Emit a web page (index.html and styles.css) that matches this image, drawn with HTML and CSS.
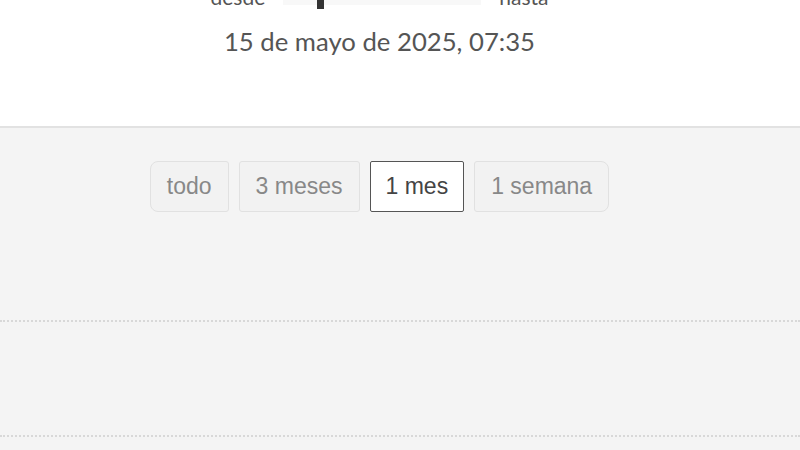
FILE: index.html
```html
<!doctype html>
<html lang="es">
<head>
<meta charset="utf-8">
<title>Rango de fechas</title>
<link rel="stylesheet" href="styles.css">
</head>
<body>
<div class="top">
    <div class="wrap head">
        <div class="range">
            <span class="lbl">desde</span>
            <div class="track"><span class="handle"></span></div>
            <span class="lbl">hasta</span>
        </div>
        <div class="fecha">15 de mayo de 2025, 07:35</div>
    </div>
</div>
<div class="panel">
    <div class="wrap periodos">
        <button class="btn first">todo</button>
        <button class="btn">3 meses</button>
        <button class="btn on">1 mes</button>
        <button class="btn last">1 semana</button>
    </div>
    <div class="grid">
        <div class="line"></div>
        <div class="line last"></div>
    </div>
</div>
</body>
</html>
```
FILE: styles.css
```css
*{
    margin:0;
    padding:0;
    box-sizing:border-box;
}
body{
    width:800px;
    height:450px;
    overflow:hidden;
    background:#f4f4f4;
    font-family:"Liberation Sans",Arial,sans-serif;
}
.wrap{
    width:759px;
}
.top{
    height:128px;
    background:#fff;
    border-bottom:2px solid #e2e2e2;
}
.head{
    display:flex;
    flex-direction:column;
    align-items:center;
}
.range{
    margin-top:-15px;
    display:flex;
    align-items:center;
    gap:18px;
    height:22px;
    font-family:Lato,sans-serif;
    font-size:21px;
    color:#555;
}
.track{
    width:198px;
    height:18px;
    background:#f8f8f8;
    position:relative;
}
.handle{
    position:absolute;
    left:34px;
    top:0;
    width:7px;
    height:22px;
    background:#333;
}
.fecha{
    margin-top:19px;
    font-family:Lato,sans-serif;
    font-size:25.7px;
    color:#555;
}
.periodos{
    display:flex;
    justify-content:center;
    gap:10px;
    padding-top:33px;
}
.btn{
    height:51px;
    padding:0 16px;
    font-family:"Liberation Sans",Arial,sans-serif;
    font-size:23px;
    color:#888;
    background:#f2f2f2;
    border:1px solid #e1e1e1;
    border-radius:3px;
}
.btn.first{
    border-radius:8px 3px 3px 8px;
}
.btn.last{
    border-radius:3px 8px 8px 3px;
}
.btn.on{
    background:#fff;
    border-color:#555;
    color:#444;
    border-radius:2px;
    padding:0 15px;
}
.grid{
    padding-top:108px;
}
.line{
    border-top:2px dotted #d8d8d8;
    height:115px;
}
.line.last{
    height:13px;
}
```
